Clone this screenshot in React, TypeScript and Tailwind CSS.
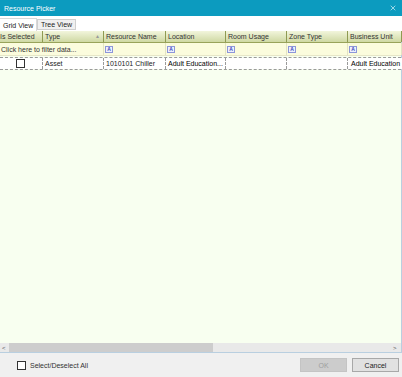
import { X } from 'lucide-react';

const cols = [
  { key: 'sel', label: 'Is Selected', w: 'w-[43px]' },
  { key: 'type', label: 'Type', w: 'w-[61px]' },
  { key: 'name', label: 'Resource Name', w: 'w-[62px]' },
  { key: 'loc', label: 'Location', w: 'w-[60px]' },
  { key: 'room', label: 'Room Usage', w: 'w-[61px]' },
  { key: 'zone', label: 'Zone Type', w: 'w-[61px]' },
  { key: 'bu', label: 'Business Unit', w: 'w-[54px]' },
];

const FilterIcon = () => (
  <span className="flex h-[7px] w-[8px] items-center justify-center border border-[#8d96d8] bg-[#eef0ff] text-[5px] font-bold leading-none text-[#3a49b8]">
    A
  </span>
);

const App = () => {
  return (
    <div className="flex h-[377px] w-[402px] flex-col overflow-hidden bg-white font-['Liberation_Sans',Arial,sans-serif] text-[7px] leading-none text-[#222]">
      {/* Title bar */}
      <div className="flex h-[16px] shrink-0 items-center justify-between bg-[#0c9bbf] pl-[4px] pr-[5px] text-white">
        <span>Resource Picker</span>
        <X className="h-[8px] w-[8px]" strokeWidth={2} color="#e6f6fb" />
      </div>

      {/* Tabs */}
      <div className="flex h-[15px] shrink-0 items-end bg-white pl-[0px]">
        <div className="flex h-[13px] w-[37px] items-center border-r border-t border-[#d9d9d9] bg-white pl-[3px]">
          Grid View
        </div>
        <div className="mb-[1px] flex h-[11px] w-[39px] items-center border border-[#cfcfcf] bg-[#f0f0f0] pl-[3px]">
          Tree View
        </div>
      </div>

      {/* Grid */}
      <div className="flex min-h-0 flex-1 flex-col border-r border-[#b9cfe0] bg-[#f8fff0]">
        {/* Header */}
        <div className="flex h-[12px] shrink-0 border-b border-[#98a35a] bg-gradient-to-b from-[#f2f5dc] to-[#cfd9a3]">
          {cols.map((c) => (
            <div
              key={c.key}
              className={`${c.w} relative flex shrink-0 items-center overflow-hidden whitespace-nowrap border-r border-[#8f9a52] pl-[1px] text-[#333]`}
            >
              {c.key === 'sel' ? <span className="-ml-[1px]">Is Selected</span> : <span className="pl-[1px]">{c.label}</span>}
              {c.key === 'type' && (
                <span className="absolute right-[3px] top-[3px] text-[5px] text-[#9a9a9a]">▲</span>
              )}
            </div>
          ))}
        </div>

        {/* Filter row */}
        <div className="flex h-[13px] shrink-0 border-b border-[#e6e6c8] bg-[#fbfcdd]">
          <div className="flex w-[104px] shrink-0 items-center whitespace-nowrap border-r border-[#e3e3c3] pl-[1px] text-[#333]">
            Click here to filter data...
          </div>
          {cols.slice(2).map((c) => (
            <div key={c.key} className={`${c.w} flex shrink-0 items-center border-r border-[#e3e3c3] pl-[1px]`}>
              <FilterIcon />
            </div>
          ))}
        </div>

        {/* Data row */}
        <div className="mt-[1px] flex h-[13px] shrink-0 border-y border-dashed border-[#9a9a9a]">
          <div className="flex w-[43px] shrink-0 items-center justify-center border-r border-dashed border-[#9a9a9a] bg-white">
            <span className="ml-[-1px] h-[9px] w-[9px] border border-[#333] bg-white" />
          </div>
          <div className="flex w-[61px] shrink-0 items-center border-r border-dashed border-[#9a9a9a] bg-white pl-[2px]">
            Asset
          </div>
          <div className="flex w-[62px] shrink-0 items-center border-r border-dashed border-[#9a9a9a] bg-white pl-[2px]">
            1010101 Chiller
          </div>
          <div className="flex w-[60px] shrink-0 items-center overflow-hidden whitespace-nowrap border-r border-dashed border-[#9a9a9a] bg-white pl-[2px] text-black">
            Adult Education...
          </div>
          <div className="w-[61px] shrink-0 border-r border-dashed border-[#9a9a9a] bg-white" />
          <div className="w-[61px] shrink-0 border-r border-dashed border-[#9a9a9a] bg-white" />
          <div className="flex w-[54px] shrink-0 items-center overflow-hidden whitespace-nowrap bg-white pl-[3px] text-black">
            Adult Education
          </div>
        </div>

        <div className="flex-1" />

        {/* Horizontal scrollbar */}
        <div className="flex h-[10px] shrink-0 items-center border-b border-[#b9cfe0] bg-[#e9e9e9]">
          <span className="w-[9px] pl-[2px] text-[6px] text-[#555]">&lt;</span>
          <div className="h-full w-[204px] bg-[#cdcdcd]" />
          <div className="flex-1" />
          <span className="w-[8px] text-[6px] text-[#555]">&gt;</span>
        </div>
      </div>

      {/* Footer */}
      <div className="flex h-[24px] shrink-0 items-center bg-[#f0f0f0] pl-[17px] pr-[3px]">
        <span className="h-[9px] w-[9px] border border-[#333] bg-white" />
        <span className="ml-[4px] text-[#333]">Select/Deselect All</span>
        <div className="flex-1" />
        <button className="flex h-[14px] w-[47px] items-center justify-center border border-[#c4c4c4] bg-[#cccccc] text-[#9f9f9f]">
          OK
        </button>
        <button className="ml-[5px] flex h-[14px] w-[47px] items-center justify-center border border-[#a8a8a8] bg-[#e1e1e1] text-[#222]">
          Cancel
        </button>
      </div>
    </div>
  );
};

export default App;
